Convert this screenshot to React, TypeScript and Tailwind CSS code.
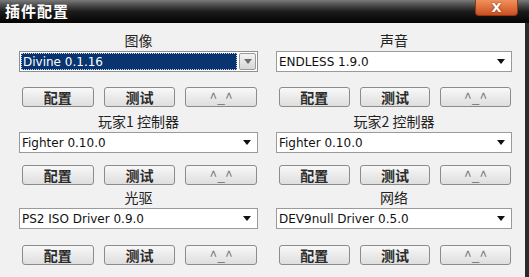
const cn = '"Noto Sans CJK SC", "Liberation Sans", sans-serif';

const Arrow = ({ light }: { light?: boolean }) => (
  <svg width="8" height="5" viewBox="0 0 8 5">
    <path d="M0 0h8L4 5z" fill={light ? "#6b6b6b" : "#111"} />
  </svg>
);

const Select = ({ value, focused }: { value: string; focused?: boolean }) =>
  focused ? (
    <div className="mt-[2px] flex h-[21px] items-center border border-[#8f8f8f] bg-white p-[1px]">
      <div className="flex h-full flex-1 items-center border border-dotted border-[#c9d6ea] bg-[#0a3470] pl-[1px] text-[12px] text-white" style={{ fontFamily: '"DejaVu Sans", sans-serif' }}>
        {value}
      </div>
      <div className="ml-[2px] flex h-full w-[17px] items-center justify-center rounded-[2px] border border-[#9a9a9a] bg-gradient-to-b from-[#f4f4f4] to-[#d6d6d6]">
        <Arrow light />
      </div>
    </div>
  ) : (
    <div className="mt-[2px] flex h-[21px] items-center justify-between border border-[#9a9a9a] bg-white pl-[2px] pr-[6px] text-[12px] text-[#111]" style={{ fontFamily: '"DejaVu Sans", sans-serif' }}>
      <span>{value}</span>
      <Arrow />
    </div>
  );

const Btn = ({ children, faint }: { children: React.ReactNode; faint?: boolean }) => (
  <div
    className={`flex h-[20px] items-center justify-center rounded-[3px] border border-[#8b8b8b] bg-gradient-to-b from-[#f8f8f8] to-[#dedede] text-[14px] ${faint ? "font-normal text-[#777]" : "font-bold text-[#2a2a2a]"}`}
    style={{ fontFamily: cn }}
  >
    {children}
  </div>
);

const Section = ({ label, value, focused, gap, after }: { label: string; value: string; focused?: boolean; gap: string; after: string }) => (
  <div className={after}>
    <div className="flex h-[17px] items-center justify-center text-[14px] text-[#222]" style={{ fontFamily: cn }}>
      {label}
    </div>
    <Select value={value} focused={focused} />
    <div className={`${gap} grid grid-cols-3 gap-[10px] pl-[3px] pr-[1px]`}>
      <Btn>配置</Btn>
      <Btn>测试</Btn>
      <Btn faint>^_^</Btn>
    </div>
  </div>
);

export default function App() {
  return (
    <div className="relative h-[277px] w-[529px] overflow-hidden bg-[#f1f1f1]">
      <div className="flex h-[23px] items-center bg-gradient-to-b from-[#7a7a7a] via-[#1c1c1c] to-[#050505] pl-[5px]">
        <span className="text-[15px] font-bold tracking-[1px] text-white" style={{ fontFamily: cn }}>
          插件配置
        </span>
      </div>
      <div className="absolute right-[11px] top-0 flex h-[16px] w-[43px] items-center justify-center rounded-b-[4px] border border-t-0 border-[#8a3a14] bg-gradient-to-b from-[#f0905c] to-[#cc4e1e] text-[13px] font-bold text-white" style={{ fontFamily: '"DejaVu Sans", sans-serif', textShadow: "0 0 2px #7a2a08" }}>
        X
      </div>
      <div className="flex h-[254px] border-r-[4px] border-[#2a2a2a]">
        <div className="grid flex-1 grid-cols-[239px_236px] gap-x-[18px] pl-[19px] pt-[9px]">
          <div>
            <Section label="图像" value="Divine  0.1.16" focused gap="mt-[15px]" after="mb-[6px]" />
            <Section label="玩家1 控制器" value="Fighter 0.10.0" gap="mt-[12px]" after="mb-[4px]" />
            <Section label="光驱" value="PS2 ISO Driver 0.9.0" gap="mt-[16px]" after="" />
          </div>
          <div>
            <Section label="声音" value="ENDLESS 1.9.0" gap="mt-[15px]" after="mb-[6px]" />
            <Section label="玩家2 控制器" value="Fighter 0.10.0" gap="mt-[12px]" after="mb-[4px]" />
            <Section label="网络" value="DEV9null Driver 0.5.0" gap="mt-[16px]" after="" />
          </div>
        </div>
      </div>
    </div>
  );
}
